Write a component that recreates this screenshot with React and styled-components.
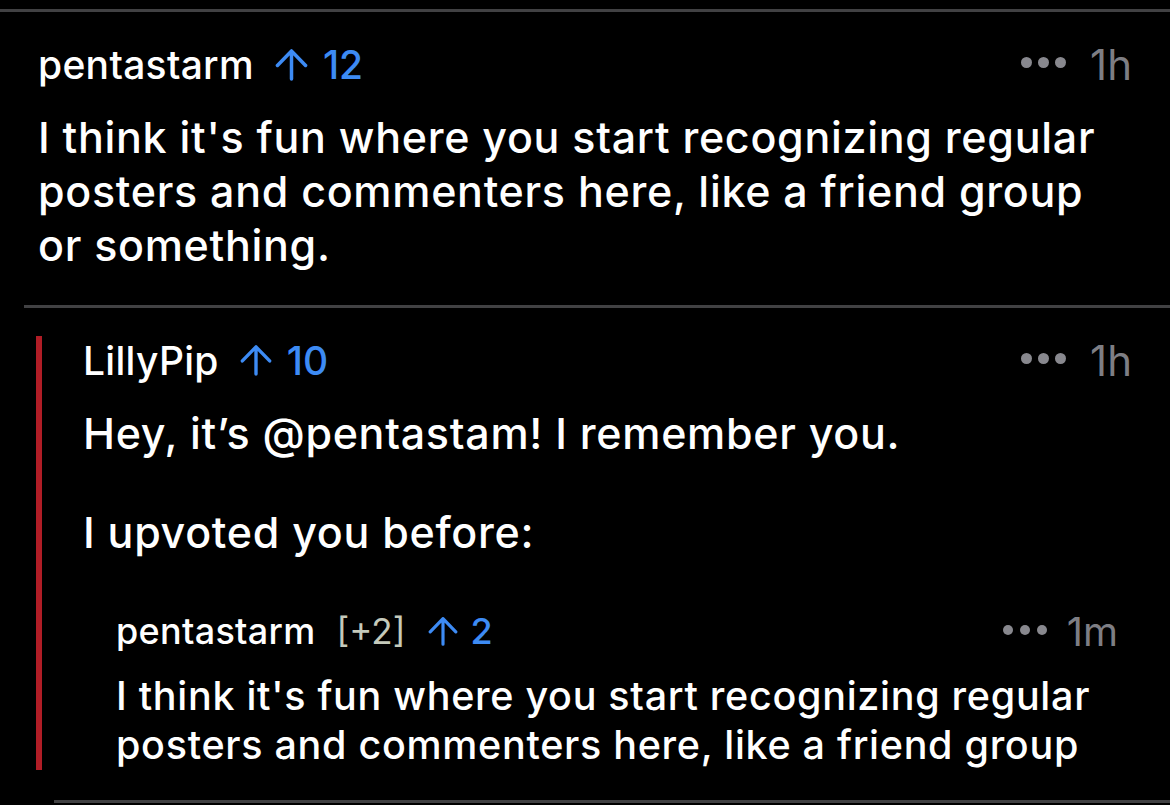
import React from 'react';
import styled, { createGlobalStyle } from 'styled-components';

const GlobalStyle = createGlobalStyle`
  html, body {
    margin: 0;
    padding: 0;
    background: #000;
  }
  body {
    font-family: Inter, "Noto Sans", "Liberation Sans", sans-serif;
    color: #fff;
    -webkit-font-smoothing: antialiased;
  }
`;

const Page = styled.div`
  width: 1170px;
  height: 805px;
  overflow: hidden;
  background: #000;
  padding-top: 9px;
  box-sizing: border-box;
`;

const Divider = styled.div`
  height: 3px;
  background: #414143;
  margin-left: ${({ inset }) => inset || 0}px;
`;

const Comment = styled.div`
  padding: 28px 38px 33px 38px;
`;

const Reply = styled.div`
  margin: 28px 0 30px 36px;
  border-left: 6px solid #b01d26;
  padding: 0 38px 0 41px;
`;

const Quote = styled.div`
  margin: 50px 14px 0 33px;
`;

const Header = styled.div`
  display: flex;
  align-items: center;
  height: ${({ h }) => h}px;
`;

const Author = styled.span`
  font-size: ${({ size }) => size}px;
  font-weight: 500;
  letter-spacing: 0.3px;
  color: #fff;
`;

const Flair = styled.span`
  font-size: 35px;
  font-weight: 400;
  color: #c5cabb;
  margin-left: 21px;
`;

const Score = styled.span`
  display: flex;
  align-items: center;
  gap: ${({ gap }) => gap}px;
  margin-left: ${({ offset }) => offset}px;
  color: #3d8bf4;
  font-size: ${({ size }) => size}px;
  font-weight: 500;
`;

const Meta = styled.div`
  margin-left: auto;
  display: flex;
  align-items: center;
  gap: ${({ gap }) => gap}px;
  color: #7e7e84;
  font-size: ${({ size }) => size}px;
  font-weight: 400;
`;

const Dots = styled.span`
  display: flex;
  gap: ${({ gap }) => gap}px;
  margin-top: -3px;
`;

const Dot = styled.span`
  width: ${({ d }) => d}px;
  height: ${({ d }) => d}px;
  border-radius: 50%;
  background: #88888e;
`;

const Body = styled.div`
  margin-top: ${({ top }) => top}px;
  font-size: ${({ size }) => size}px;
  line-height: ${({ lh }) => lh}px;
  font-weight: 500;
  letter-spacing: 0.7px;
  color: #fff;
`;

const Para = styled.p`
  margin: 0;
  & + & {
    margin-top: 45px;
  }
`;

const UpArrow = ({ w, h }) => (
  <svg width={w} height={h} viewBox="0 0 34 34" fill="none">
    <path
      d="M17 32V3M2.5 18L17 3L31.5 18"
      stroke="currentColor"
      strokeWidth="3.6"
      strokeLinecap="round"
      strokeLinejoin="round"
    />
  </svg>
);

const MoreDots = ({ d, gap }) => (
  <Dots gap={gap}>
    <Dot d={d} />
    <Dot d={d} />
    <Dot d={d} />
  </Dots>
);

export default function App() {
  return (
    <Page>
      <GlobalStyle />
      <Divider />
      <Comment>
        <Header h={48}>
          <Author size={39}>pentastarm</Author>
          <Score offset={21} gap={15} size={39}>
            <UpArrow w={33} h={33} />
            12
          </Score>
          <Meta gap={24} size={42}>
            <MoreDots d={11} gap={6} />
            1h
          </Meta>
        </Header>
        <Body top={22} size={43} lh={54}>
          I think it's fun where you start recognizing regular posters and commenters here, like a friend group or something.
        </Body>
      </Comment>
      <Divider inset={24} />
      <Reply>
        <Header h={48}>
          <Author size={39}>LillyPip</Author>
          <Score offset={21} gap={15} size={39}>
            <UpArrow w={32} h={32} />
            10
          </Score>
          <Meta gap={24} size={42}>
            <MoreDots d={11} gap={6} />
            1h
          </Meta>
        </Header>
        <Body top={22} size={43} lh={54}>
          <Para>Hey, it’s @pentastam! I remember you.</Para>
          <Para>I upvoted you before:</Para>
        </Body>
        <Quote>
          <Header h={44}>
            <Author size={36}>pentastarm</Author>
            <Flair>[+2]</Flair>
            <Score offset={23} gap={12} size={36}>
              <UpArrow w={30} h={30} />
              2
            </Score>
            <Meta gap={20} size={40}>
              <MoreDots d={10} gap={7} />
              1m
            </Meta>
          </Header>
          <Body top={19} size={39.5} lh={49}>
            I think it's fun where you start recognizing regular posters and commenters here, like a friend group
          </Body>
        </Quote>
      </Reply>
      <Divider inset={54} />
    </Page>
  );
}
